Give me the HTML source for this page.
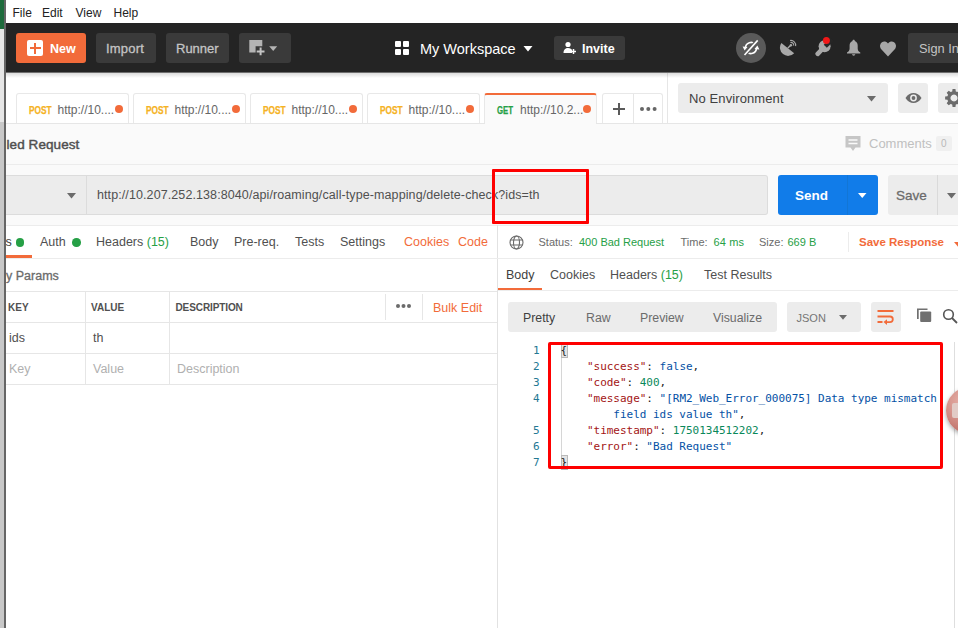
<!DOCTYPE html>
<html>
<head>
<meta charset="utf-8">
<title>Postman</title>
<style>
html,body{margin:0;padding:0;}
body{width:958px;height:628px;position:relative;overflow:hidden;background:#fff;font-family:"Liberation Sans",sans-serif;font-size:13px;color:#505050;}
.a{position:absolute;white-space:nowrap;}
.t{position:absolute;white-space:nowrap;line-height:16px;}
.btn{position:absolute;border-radius:3px;}
.org{color:#f26b3a;}
.grn{color:#26a046;}
.dot{position:absolute;width:8px;height:8px;border-radius:50%;background:#f26b3a;}
.gdot{position:absolute;width:8.500px;height:8.500px;border-radius:50%;background:#26a046;}
.tab{position:absolute;top:93px;height:30px;width:113px;border:1px solid #e8e8e8;border-bottom:none;border-radius:3px 3px 0 0;background:#fff;box-sizing:border-box;}
.tab .m{position:absolute;left:12px;top:9.500px;font-size:10px;font-weight:bold;color:#f5b223;line-height:14px;transform:scaleX(0.83);transform-origin:0 50%;-webkit-text-stroke:0.250px;}
.tab .u{position:absolute;left:40.500px;top:8px;font-size:12px;color:#666;line-height:16px;}
.tab .dot{left:98px;top:11px;}
.hl{position:absolute;height:1px;background:#e6e6e6;}
.vl{position:absolute;width:1px;background:#e6e6e6;}
.mono{font-family:"DejaVu Sans Mono","Liberation Mono",monospace;font-size:11px;letter-spacing:-0.020px;line-height:16px;position:absolute;white-space:pre;}
.ln{color:#237893;text-align:right;width:20px;}
.k{color:#a31515;}
.s{color:#0451a5;}
.n{color:#09885a;}
.p{color:#222;}
</style>
</head>
<body>
<!-- left desktop strip -->
<div class="a" style="left:0;top:0;width:5px;height:628px;background:#e6e6e6;z-index:10;"></div>
<div class="a" style="left:0;top:0;width:5px;height:29px;background:#1e6b3c;z-index:10;"></div>
<div class="a" style="left:0;top:122px;width:5px;height:506px;background:#c8c8c8;z-index:10;"></div>
<div class="a" style="left:4px;top:0;width:2px;height:628px;background:#666;z-index:11;"></div>

<!-- menu bar -->
<div class="a" style="left:6px;top:0;width:952px;height:23px;background:#fff;"></div>
<div class="t" style="left:12.500px;top:5px;font-size:12px;color:#222;">File</div>
<div class="t" style="left:42px;top:5px;font-size:12px;color:#222;">Edit</div>
<div class="t" style="left:75.500px;top:5px;font-size:12px;color:#222;">View</div>
<div class="t" style="left:113.500px;top:5px;font-size:12px;color:#222;">Help</div>

<!-- header -->
<div class="a" style="left:6px;top:23px;width:952px;height:49px;background:#242424;"></div>
<div class="a" style="left:6px;top:72px;width:952px;height:1px;background:#6e6e6e;z-index:3;"></div>
<div class="a" style="left:6px;top:73px;width:952px;height:5px;background:linear-gradient(to bottom,rgba(0,0,0,0.140),rgba(0,0,0,0));z-index:3;"></div>
<div class="btn" style="left:16px;top:33px;width:70px;height:30px;background:#f26b3a;"></div>
<div class="a" style="left:27px;top:40px;width:16px;height:16px;background:#fff;border-radius:2px;"></div>
<div class="a" style="left:29.500px;top:47px;width:11px;height:2px;background:#f26b3a;"></div>
<div class="a" style="left:34px;top:42.500px;width:2px;height:11px;background:#f26b3a;"></div>
<div class="t" style="left:50px;top:41px;font-size:12.500px;font-weight:bold;color:#fff;">New</div>
<div class="btn" style="left:96px;top:33px;width:60px;height:30px;background:#3a3a3a;"></div>
<div class="t" style="left:106px;top:41px;font-size:13px;color:#c4c4c4;-webkit-text-stroke:0.300px;letter-spacing:0.200px;">Import</div>
<div class="btn" style="left:166px;top:33px;width:63px;height:30px;background:#3a3a3a;"></div>
<div class="t" style="left:176px;top:41px;font-size:13px;color:#c4c4c4;-webkit-text-stroke:0.300px;">Runner</div>
<div class="btn" style="left:239px;top:33px;width:52px;height:30px;background:#3a3a3a;"></div>
<svg class="a" style="left:248px;top:39px;" width="34" height="18" viewBox="0 0 34 18">
<path d="M1.300 1h13v6.300h-6.700v6.200h-6.300z" fill="#b4b4b4"/>
<path d="M12.600 8.500v7.800M8.700 12.400h7.800" stroke="#c4c4c4" stroke-width="2" fill="none"/>
<path d="M21.200 7.300h8l-4 4.600z" fill="#b4b4b4"/>
</svg>
<!-- workspace -->
<svg class="a" style="left:395px;top:41px;" width="14" height="14" viewBox="0 0 14 14">
<rect x="0" y="0" width="6" height="6" rx="1" fill="#fff"/><rect x="8" y="0" width="6" height="6" rx="1" fill="#fff"/>
<rect x="0" y="8" width="6" height="6" rx="1" fill="#fff"/><rect x="8" y="8" width="6" height="6" rx="1" fill="#fff"/>
</svg>
<div class="t" style="left:420px;top:41px;font-size:14.500px;color:#fff;">My Workspace</div>
<svg class="a" style="left:523px;top:46px;" width="10" height="6" viewBox="0 0 10 6"><path d="M0.500 0h9l-4.500 5.500z" fill="#fff"/></svg>
<div class="btn" style="left:554px;top:36px;width:71px;height:24px;background:#3a3a3a;"></div>
<svg class="a" style="left:563px;top:41px;" width="14" height="14" viewBox="0 0 14 14">
<circle cx="5" cy="3.500" r="2.600" fill="#fff"/><path d="M0.500 12c0-3.500 2-5 4.500-5s3.500 1 4 2v3z" fill="#fff"/>
<path d="M10.500 8v5M8 10.500h5" stroke="#fff" stroke-width="1.500"/>
</svg>
<div class="t" style="left:582px;top:41px;font-size:12.500px;font-weight:bold;color:#fff;">Invite</div>
<!-- right icons -->
<div class="a" style="left:736px;top:33px;width:30px;height:30px;border-radius:50%;background:#5a5a5a;"></div>
<svg class="a" style="left:736px;top:33px;" width="30" height="30" viewBox="0 0 30 30">
<g fill="none" stroke="#fff" stroke-width="1.700"><path d="M9.500 15a5.500 5.500 0 0 1 10-3.150"/><path d="M20.500 15a5.500 5.500 0 0 1-10 3.150"/></g>
<path d="M6.600 13.400l4.900 0.600l-2.900 3.600z" fill="#fff"/><path d="M23.400 16.600l-4.900-0.600l2.900-3.600z" fill="#fff"/>
<path d="M8.500 22L21.700 7.400" stroke="#5a5a5a" stroke-width="4"/>
<path d="M8.500 22L21.700 7.400" stroke="#fff" stroke-width="1.600"/>
</svg>
<svg class="a" style="left:778px;top:38px;" width="20" height="20" viewBox="0 0 20 20">
<path d="M3.400 5L16.200 15.200A8.200 8.200 0 0 1 3.400 5z" fill="#a8a8a8"/>
<path d="M9.800 10.100L12.900 7.200" stroke="#a8a8a8" stroke-width="1.400"/>
<circle cx="12.900" cy="7.200" r="1.250" fill="#a8a8a8"/>
<path d="M12.410 4.440A2.800 2.800 0 0 1 15.660 7.690M12.070 2.470A4.800 4.800 0 0 1 17.630 8.030" stroke="#a8a8a8" stroke-width="1.100" fill="none"/>
</svg>
<svg class="a" style="left:814px;top:37px;" width="20" height="20" viewBox="0 0 20 20">
<circle cx="10.600" cy="9.200" r="6" fill="#a8a8a8"/>
<path d="M10.200 10L3.700 16.800" stroke="#a8a8a8" stroke-width="4.600" stroke-linecap="round"/>
<path d="M11.300 9.300L18 2.600" stroke="#262626" stroke-width="4.400"/>
<circle cx="12.400" cy="3.500" r="3.500" fill="#f01818"/>
</svg>
<svg class="a" style="left:846px;top:39px;" width="16" height="18" viewBox="0 0 16 18">
<path d="M7.650 0.800C6.900 0.800 6.500 1.300 6.500 2C4.600 2.600 3.600 4.400 3.600 6.600L3.600 9.500C3.600 11.500 2.600 12.600 1 13.600L1 14.500L14.300 14.500L14.300 13.600C12.700 12.600 11.700 11.500 11.700 9.500L11.700 6.600C11.700 4.400 10.700 2.600 8.800 2C8.800 1.300 8.400 0.800 7.650 0.800Z" fill="#a8a8a8"/><path d="M5.900 15.300a1.800 1.800 0 0 0 3.500 0z" fill="#a8a8a8"/>
</svg>
<svg class="a" style="left:879px;top:40px;" width="18" height="17" viewBox="0 0 18 16" preserveAspectRatio="none">
<path d="M9 15.500L1.800 8.200a4.300 4.300 0 0 1 7.200-5 4.300 4.300 0 0 1 7.200 5z" fill="#a8a8a8"/>
</svg>
<div class="btn" style="left:908px;top:33px;width:60px;height:30px;background:#3a3a3a;"></div>
<div class="t" style="left:919px;top:41px;font-size:12.800px;color:#c4c4c4;">Sign In</div>

<!-- tab strip -->
<div class="a" style="left:6px;top:73px;width:952px;height:52px;background:#fff;"></div>
<div class="tab" style="left:16px;"><span class="m">POST</span><span class="u">http://10....</span><span class="dot"></span></div>
<div class="tab" style="left:133px;"><span class="m">POST</span><span class="u">http://10....</span><span class="dot"></span></div>
<div class="tab" style="left:250px;"><span class="m">POST</span><span class="u">http://10....</span><span class="dot"></span></div>
<div class="tab" style="left:367px;"><span class="m">POST</span><span class="u">http://10....</span><span class="dot"></span></div>
<div class="tab" style="left:484px;width:113px;height:31px;border-top:2px solid #f26b3a;background:#fafafa;"><span class="m" style="color:#26a046;top:8.500px;transform:scaleX(0.780);">GET</span><span class="u" style="left:35px;top:7px;">http://10.2...</span><span class="dot" style="top:10px;left:98px;"></span></div>
<div class="a" style="left:602px;top:93px;width:61px;height:30px;border:1px solid #e8e8e8;border-bottom:none;border-radius:3px 3px 0 0;box-sizing:border-box;"></div>
<div class="vl" style="left:633px;top:94px;height:29px;"></div>
<div class="a" style="left:613px;top:108px;width:12px;height:2px;background:#5a5a5a;"></div>
<div class="a" style="left:618px;top:103px;width:2px;height:12px;background:#5a5a5a;"></div>
<div class="a" style="left:640px;top:107px;width:4px;height:4px;border-radius:50%;background:#666;box-shadow:6.3px 0 0 #666,12.600px 0 0 #666;"></div>
<div class="vl" style="left:667px;top:73px;height:51px;"></div>
<div class="btn" style="left:678px;top:83px;width:210px;height:30px;background:#ececec;"></div>
<div class="t" style="left:689px;top:91px;font-size:13px;color:#404040;letter-spacing:0.100px;">No Environment</div>
<svg class="a" style="left:867px;top:96px;" width="9" height="6" viewBox="0 0 9 6"><path d="M0 0h9l-4.500 5.500z" fill="#6b6b6b"/></svg>
<div class="btn" style="left:898px;top:83px;width:30px;height:30px;background:#ececec;"></div>
<svg class="a" style="left:905px;top:92px;" width="17" height="12" viewBox="0 0 17 12">
<path d="M0.500 6c2-3.500 5-5 8-5s6 1.500 8 5c-2 3.500-5 5-8 5s-6-1.500-8-5z" fill="#6b6b6b"/><circle cx="8.500" cy="6" r="3.400" fill="#ececec"/><circle cx="8.500" cy="6" r="1.900" fill="#6b6b6b"/>
</svg>
<div class="btn" style="left:938px;top:83px;width:30px;height:30px;background:#ececec;"></div>
<svg class="a" style="left:945px;top:89px;" width="18" height="18" viewBox="0 0 18 18">
<path fill-rule="evenodd" d="M15.550 7.190L17.880 7.550L17.880 10.450L15.550 10.810L14.920 12.350L16.310 14.250L14.250 16.310L12.350 14.920L10.810 15.550L10.450 17.880L7.550 17.880L7.190 15.550L5.650 14.920L3.750 16.310L1.690 14.250L3.080 12.350L2.450 10.810L0.120 10.450L0.120 7.550L2.450 7.190L3.080 5.650L1.690 3.750L3.750 1.690L5.650 3.080L7.190 2.450L7.550 0.120L10.450 0.120L10.810 2.450L12.350 3.080L14.250 1.690L16.310 3.750L14.920 5.650zM9 5.500a3.500 3.500 0 1 0 0.010 0z" fill="#6b6b6b"/>
</svg>

<!-- request area bg -->
<div class="a" style="left:6px;top:124px;width:952px;height:101px;background:#fafafa;"></div>
<div class="hl" style="left:6px;top:123px;width:479px;"></div>
<div class="hl" style="left:596px;top:123px;width:362px;"></div>
<div class="t" style="left:6.500px;top:136.500px;font-size:13.500px;color:#505050;-webkit-text-stroke:0.450px;letter-spacing:0.080px;">led Request</div>
<svg class="a" style="left:845px;top:136px;" width="16" height="16" viewBox="0 0 16 16"><path d="M0.500 0h15v11.500h-5l-2.500 3.500l-2.500-3.500h-5z" fill="#c6c6c6"/><path d="M3.500 4h9M3.500 7.500h9" stroke="#fafafa" stroke-width="1.400"/></svg>
<div class="t" style="left:869px;top:136px;font-size:13px;color:#c0c0c0;">Comments</div>
<div class="a" style="left:936px;top:136px;width:16px;height:15px;background:#f0f0f0;border-radius:2px;"></div>
<div class="t" style="left:941px;top:136px;font-size:10px;color:#b8b8b8;">0</div>
<div class="hl" style="left:6px;top:164px;width:952px;background:#ececec;"></div>

<!-- url row -->
<div class="a" style="left:6px;top:175px;width:762px;height:40px;background:#ececec;border:1px solid #dcdcdc;border-left:none;box-sizing:border-box;border-radius:0 3px 3px 0;"></div>
<div class="vl" style="left:86px;top:176px;height:38px;background:#dcdcdc;"></div>
<svg class="a" style="left:66.500px;top:193px;" width="9" height="6" viewBox="0 0 9 6"><path d="M0 0h9l-4.500 5.500z" fill="#6b6b6b"/></svg>
<div class="t" style="left:97px;top:187px;font-size:12.500px;color:#505050;letter-spacing:0.095px;">http://10.207.252.138:8040/api/roaming/call-type-mapping/delete-check?ids=th</div>
<div class="btn" style="left:778px;top:175px;width:100px;height:40px;background:#117ce9;"></div>
<div class="vl" style="left:847px;top:175px;height:40px;background:#1276d6;"></div>
<div class="t" style="left:795px;top:188px;font-size:13.500px;font-weight:bold;color:#fff;">Send</div>
<svg class="a" style="left:857.500px;top:193px;" width="9" height="6" viewBox="0 0 9 6"><path d="M0 0h8.500l-4.250 5z" fill="#fff"/></svg>
<div class="btn" style="left:888px;top:175px;width:80px;height:40px;background:#ececec;"></div>
<div class="vl" style="left:937px;top:175px;height:40px;background:#dadada;"></div>
<div class="t" style="left:896px;top:188px;font-size:13.500px;color:#6b6b6b;-webkit-text-stroke:0.300px;">Save</div>
<svg class="a" style="left:947px;top:193px;" width="9" height="6" viewBox="0 0 9 6"><path d="M0 0h9l-4.500 5.500z" fill="#6b6b6b"/></svg>

<!-- lower panels -->
<div class="a" style="left:6px;top:225px;width:952px;height:403px;background:#fff;"></div>
<div class="hl" style="left:6px;top:225px;width:952px;background:#ececec;"></div>
<div class="vl" style="left:497px;top:225px;height:403px;background:#e2e2e2;"></div>

<!-- request tabs -->
<div class="t" style="left:5.500px;top:234px;font-size:12.500px;color:#404040;">s</div>
<div class="gdot" style="left:15.500px;top:238px;"></div>
<div class="a" style="left:6px;top:255px;width:26px;height:3px;background:#f26b3a;"></div>
<div class="t" style="left:40px;top:234px;font-size:12.500px;">Auth</div>
<div class="gdot" style="left:72px;top:238px;"></div>
<div class="t" style="left:96px;top:234px;font-size:12.500px;">Headers <span class="grn">(15)</span></div>
<div class="t" style="left:190px;top:234px;font-size:12.500px;">Body</div>
<div class="t" style="left:234px;top:234px;font-size:12.500px;">Pre-req.</div>
<div class="t" style="left:295px;top:234px;font-size:12.500px;">Tests</div>
<div class="t" style="left:340px;top:234px;font-size:12.500px;">Settings</div>
<div class="t org" style="left:404px;top:234px;font-size:12.500px;">Cookies</div>
<div class="t org" style="left:458px;top:234px;font-size:12.500px;">Code</div>
<div class="hl" style="left:6px;top:258px;width:952px;background:#ececec;"></div>
<div class="t" style="left:6px;top:268px;font-size:12.500px;color:#6b6b6b;-webkit-text-stroke:0.300px;">y Params</div>

<!-- params table -->
<div class="hl" style="left:6px;top:291px;width:491px;"></div>
<div class="hl" style="left:6px;top:322px;width:491px;"></div>
<div class="hl" style="left:6px;top:353px;width:491px;"></div>
<div class="hl" style="left:6px;top:384px;width:491px;"></div>
<div class="vl" style="left:85px;top:291px;height:93px;"></div>
<div class="vl" style="left:169px;top:291px;height:93px;"></div>
<div class="vl" style="left:385px;top:294px;height:26px;"></div>
<div class="vl" style="left:422px;top:294px;height:26px;"></div>
<div class="t" style="left:8px;top:300px;font-size:10px;font-weight:bold;color:#505050;">KEY</div>
<div class="t" style="left:91px;top:300px;font-size:10px;font-weight:bold;color:#505050;">VALUE</div>
<div class="t" style="left:175.500px;top:300px;font-size:10px;font-weight:bold;color:#505050;letter-spacing:-0.100px;">DESCRIPTION</div>
<div class="a" style="left:396px;top:304px;width:4px;height:4px;border-radius:50%;background:#6b6b6b;box-shadow:5.500px 0 0 #6b6b6b,11px 0 0 #6b6b6b;"></div>
<div class="t org" style="left:433px;top:300px;font-size:12.500px;">Bulk Edit</div>
<div class="t" style="left:9px;top:330px;font-size:12.500px;">ids</div>
<div class="t" style="left:93px;top:330px;font-size:12.500px;">th</div>
<div class="t" style="left:9px;top:361px;font-size:12.500px;color:#b0b0b0;">Key</div>
<div class="t" style="left:93px;top:361px;font-size:12.500px;color:#b0b0b0;">Value</div>
<div class="t" style="left:177px;top:361px;font-size:12.500px;color:#b0b0b0;">Description</div>

<!-- response status -->
<svg class="a" style="left:508.500px;top:235px;" width="15" height="15" viewBox="0 0 15 15">
<g fill="none" stroke="#6b6b6b" stroke-width="1.100"><circle cx="7.500" cy="7.500" r="6.500"/><ellipse cx="7.500" cy="7.500" rx="3" ry="6.500"/><path d="M1.500 5h12M1.500 10h12"/></g>
</svg>
<div class="t" style="left:538.500px;top:234px;font-size:11px;color:#6b6b6b;">Status:</div>
<div class="t grn" style="left:579px;top:234px;font-size:11px;">400 Bad Request</div>
<div class="t" style="left:680.500px;top:234px;font-size:11px;color:#6b6b6b;">Time:</div>
<div class="t grn" style="left:713.500px;top:234px;font-size:11px;letter-spacing:0.150px;">64 ms</div>
<div class="t" style="left:759px;top:234px;font-size:11px;color:#6b6b6b;">Size:</div>
<div class="t grn" style="left:787.500px;top:234px;font-size:11px;">669 B</div>
<div class="vl" style="left:848px;top:232px;height:20px;background:#ececec;"></div>
<div class="t org" style="left:859px;top:234px;font-size:11.500px;font-weight:bold;">Save Response</div>
<svg class="a" style="left:953.500px;top:241.500px;" width="8" height="5.300" viewBox="0 0 9 6"><path d="M0 0h9l-4.500 5.500z" fill="#f26b3a"/></svg>

<!-- response tabs -->
<div class="t" style="left:506px;top:267px;font-size:12.500px;color:#404040;">Body</div>
<div class="a" style="left:498px;top:288px;width:44px;height:2px;background:#f26b3a;"></div>
<div class="t" style="left:550px;top:267px;font-size:12.500px;">Cookies</div>
<div class="t" style="left:610px;top:267px;font-size:12.500px;">Headers <span class="grn">(15)</span></div>
<div class="t" style="left:704px;top:267px;font-size:12.500px;">Test Results</div>
<div class="hl" style="left:498px;top:290px;width:460px;background:#ececec;"></div>

<!-- response toolbar -->
<div class="btn" style="left:508px;top:302px;width:269px;height:30px;background:#ececec;"></div>
<div class="t" style="left:523px;top:310px;font-size:12.300px;color:#404040;">Pretty</div>
<div class="t" style="left:586px;top:310px;font-size:12.300px;color:#6b6b6b;">Raw</div>
<div class="t" style="left:640px;top:310px;font-size:12.300px;color:#6b6b6b;">Preview</div>
<div class="t" style="left:713px;top:310px;font-size:12.300px;color:#6b6b6b;">Visualize</div>
<div class="btn" style="left:787px;top:302px;width:74px;height:30px;background:#ececec;"></div>
<div class="t" style="left:796.500px;top:310px;font-size:11px;color:#757575;">JSON</div>
<svg class="a" style="left:839px;top:315px;" width="8" height="5.300" viewBox="0 0 9 6"><path d="M0 0h9l-4.500 5.500z" fill="#6b6b6b"/></svg>
<div class="btn" style="left:871px;top:302px;width:30px;height:30px;background:#ececec;"></div>
<svg class="a" style="left:877px;top:309px;" width="17" height="16" viewBox="0 0 17 16">
<g fill="none" stroke="#f26b3a" stroke-width="1.800"><path d="M0.500 2h16M0.500 7.500h12.500a2.800 2.800 0 0 1 0 5.600h-4M0.500 13h5"/></g><path d="M10 10.300v5.600l-3.500-2.800z" fill="#f26b3a"/>
</svg>
<svg class="a" style="left:916px;top:307px;" width="16" height="16" viewBox="0 0 16 16"><path d="M1 1.500h10.500v1.600h-8.800v9h-1.700z" fill="#707070"/><rect x="4.200" y="4.500" width="11" height="10.500" rx="1" fill="#707070"/></svg>
<svg class="a" style="left:942px;top:308px;" width="16" height="16" viewBox="0 0 16 16"><circle cx="6.500" cy="6.500" r="4.800" fill="none" stroke="#555" stroke-width="1.600"/><path d="M10 10l5 5" stroke="#555" stroke-width="1.800"/></svg>

<!-- code -->
<div class="a" style="left:561px;top:343px;width:7px;height:15px;border:1px solid #b9b9b9;background:#e4e4e4;box-sizing:border-box;"></div>
<div class="a" style="left:561px;top:455px;width:7px;height:15px;border:1px solid #b9b9b9;background:#e4e4e4;box-sizing:border-box;"></div>
<div class="vl" style="left:561px;top:358px;height:97px;background:#d6d6d6;"></div>
<div class="mono ln" style="left:519.500px;top:343px;">1</div>
<div class="mono p" style="left:560.500px;top:343px;">{</div>
<div class="mono ln" style="left:519.500px;top:359px;">2</div>
<div class="mono p" style="left:560.500px;top:359px;">    <span class="k">"success"</span>: <span class="s">false</span>,</div>
<div class="mono ln" style="left:519.500px;top:375px;">3</div>
<div class="mono p" style="left:560.500px;top:375px;">    <span class="k">"code"</span>: <span class="n">400</span>,</div>
<div class="mono ln" style="left:519.500px;top:391px;">4</div>
<div class="mono p" style="left:560.500px;top:391px;">    <span class="k">"message"</span>: <span class="s">"[RM2_Web_Error_000075] Data type mismatch</span></div>
<div class="mono p" style="left:560.500px;top:407px;">        <span class="s">field ids value th"</span>,</div>
<div class="mono ln" style="left:519.500px;top:423px;">5</div>
<div class="mono p" style="left:560.500px;top:423px;">    <span class="k">"timestamp"</span>: <span class="n">1750134512202</span>,</div>
<div class="mono ln" style="left:519.500px;top:439px;">6</div>
<div class="mono p" style="left:560.500px;top:439px;">    <span class="k">"error"</span>: <span class="s">"Bad Request"</span></div>
<div class="mono ln" style="left:519.500px;top:455px;">7</div>
<div class="mono p" style="left:560.500px;top:455px;">}</div>
<div class="vl" style="left:954px;top:342px;height:286px;background:#dedede;"></div>
<div class="a" style="left:946px;top:387px;width:47px;height:47px;border-radius:50%;background:radial-gradient(circle at 35% 30%,#e6b0a8 0%,#d08a82 45%,#b86a62 80%,#8a4a44 100%);box-shadow:0 2px 4px rgba(0,0,0,0.350);"></div>
<div class="a" style="left:952px;top:403px;width:12px;height:15px;border-radius:2px;background:#e2cbc6;"></div>

<!-- red annotations -->
<div class="a" style="left:492px;top:169px;width:97px;height:55px;border:3px solid #fe0000;box-sizing:border-box;border-radius:1px;"></div>
<div class="a" style="left:548px;top:342px;width:395px;height:127px;border:3px solid #fe0000;box-sizing:border-box;border-radius:2px;"></div>
</body>
</html>
